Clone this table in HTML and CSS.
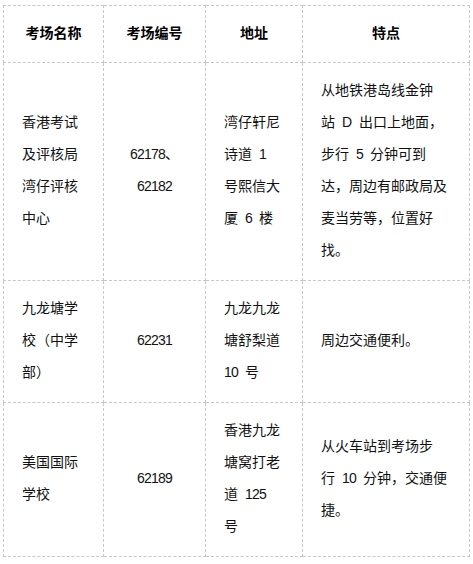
FILE: index.html
```html
<!DOCTYPE html>
<html lang="zh-CN">
<head>
<meta charset="utf-8">
<title>考场信息</title>
<link rel="stylesheet" href="styles.css">
</head>
<body>
<table class="venues">
  <colgroup>
    <col class="c-name">
    <col class="c-code">
    <col class="c-addr">
    <col class="c-note">
  </colgroup>
  <thead>
    <tr>
      <th>考场名称</th>
      <th>考场编号</th>
      <th>地址</th>
      <th>特点</th>
    </tr>
  </thead>
  <tbody>
    <tr>
      <td>香港考试<br>及评核局<br>湾仔评核<br>中心</td>
      <td class="code"><span class="num">62178</span>、<br><span class="num">62182</span></td>
      <td>湾仔轩尼<br>诗道&ensp;<span class="num">1</span><br>号熙信大<br>厦&ensp;<span class="num">6</span>&ensp;楼</td>
      <td>从地铁港岛线金钟<br>站&ensp;D&ensp;出口上地面，<br>步行&ensp;<span class="num">5</span>&ensp;分钟可到<br>达，周边有邮政局及<br>麦当劳等，位置好<br>找。</td>
    </tr>
    <tr>
      <td>九龙塘学<br>校（中学<br>部）</td>
      <td class="code"><span class="num">62231</span></td>
      <td>九龙九龙<br>塘舒梨道<br><span class="num">10</span>&ensp;号</td>
      <td>周边交通便利。</td>
    </tr>
    <tr>
      <td>美国国际<br>学校</td>
      <td class="code"><span class="num">62189</span></td>
      <td>香港九龙<br>塘窝打老<br>道&ensp;<span class="num">125</span><br>号</td>
      <td>从火车站到考场步<br>行&ensp;<span class="num">10</span>&ensp;分钟，交通便<br>捷。</td>
    </tr>
  </tbody>
</table>
</body>
</html>
```

FILE: styles.css
```css
html, body {
  background: #ffffff;
}

body {
  margin: 5px 0 0 3px;
  font-family: "Liberation Sans", "Noto Sans CJK SC", sans-serif;
  font-size: 14px;
  color: #111111;
}

.venues {
  border-collapse: collapse;
  table-layout: fixed;
  width: 466px;
}

.c-name { width: 100px; }
.c-code { width: 102px; }
.c-addr { width: 97px; }
.c-note { width: 167px; }

.venues th,
.venues td {
  border: 1px dashed #c8c8c8;
  line-height: 32px;
  vertical-align: middle;
  text-align: left;
  padding: 11px 10px 14px 18px;
  white-space: nowrap;
}

.venues th {
  font-weight: bold;
  text-align: center;
  padding: 10.5px 0 13.5px;
  color: #000000;
}

.venues td.code {
  text-align: center;
  padding-left: 0;
  padding-right: 0;
}

.num {
  letter-spacing: -0.8px;
}
```
